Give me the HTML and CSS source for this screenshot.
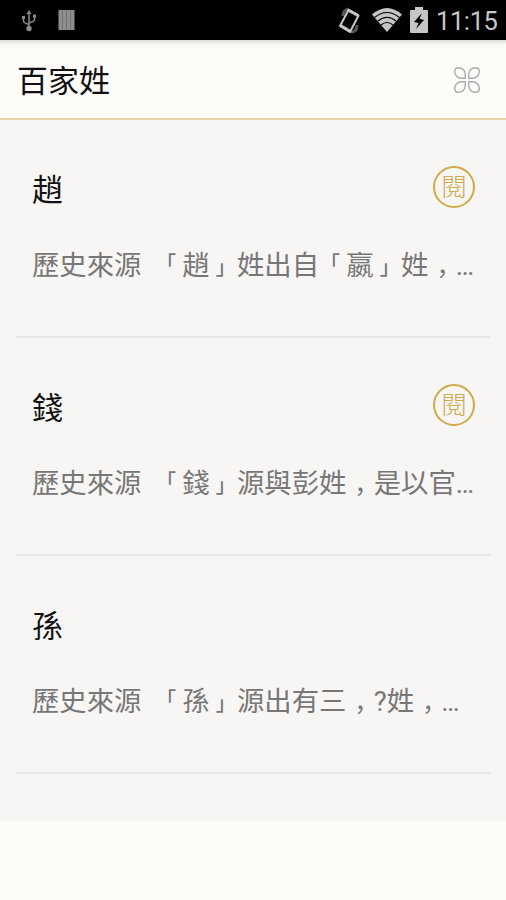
FILE: index.html
```html
<!DOCTYPE html>
<html lang="zh-Hant">
<head>
    <meta charset="UTF-8">
    <meta name="viewport" content="width=device-width, initial-scale=1.0">
    <title>百家姓</title>
    <link rel="stylesheet" href="styles.css">
</head>
<body>
    <!-- Status bar -->
    <div class="status-bar">
        <div class="status-left">
            <svg class="icon-usb" width="16" height="22" viewBox="0 0 16 22" fill="none" stroke="#8c8c8c" stroke-width="1.5">
                <path d="M8 3v15M2.500 7.500v3.500q0 2 5.500 3.500M13.500 6.500v3q0 2-5.500 3.500"/>
                <path d="M8 0l2.500 4h-5zM1 6h3v3H1zM12 4.500h3v3h-3z" fill="#8c8c8c" stroke="none"/>
                <circle cx="8" cy="18.500" r="2.700" fill="#8c8c8c" stroke="none"/>
            </svg>
            <svg class="icon-bars" width="17" height="20" viewBox="0 0 17 20">
                <path d="M.500 0h16v20H.500z" fill="#8e8e8e"/>
                <path d="M4.500 0v20M8.500 0v20M12.500 0v20" stroke="#717171"/>
            </svg>
        </div>
        <div class="status-right">
            <svg class="icon-rotate" width="24" height="28" viewBox="0 0 24 28">
                <path d="M5 9q0-6 6-7M19 18q0 7-6 7" fill="none" stroke="#555" stroke-width="3"/>
                <path d="M10.500 3L20.500 8.500 12 25 2 19z" fill="#000" stroke="#c6c6c6" stroke-width="2" stroke-linejoin="round"/>
                <path d="M10 3l10 5.500M2.500 18.500l10 6" stroke="#c6c6c6" stroke-width="3"/>
            </svg>
            <svg class="icon-wifi" width="30" height="24" viewBox="0 0 30 24">
                <path d="M0 6.500Q15-6.500 30 6.500L15 24z" fill="#c6c6c6"/>
                <path d="M2.500 9.500q12.500-10 25 0M6 13q9-7.500 18 0M9 17q6-5 12 0" fill="none" stroke="#000" stroke-width="1.200"/>
            </svg>
            <svg class="icon-battery" width="18" height="26" viewBox="0 0 18 26">
                <path d="M5 0h8v3h4q1 0 1 1v21q0 1-1 1H1q-1 0-1-1V4q0-1 1-1h4z" fill="#c6c6c6"/>
                <path d="M12 6L4 15l4.500 1L6 22l8-9-4.500-1.200z" fill="#000"/>
            </svg>
            <span class="clock">11:15</span>
        </div>
    </div>

    <!-- Title bar -->
    <header class="header">
        <h1 class="header-title">百家姓</h1>
        <svg class="icon-menu" width="28" height="28" viewBox="0 0 28 28" fill="none" stroke="#aaa" stroke-width="1.400">
            <path id="petal" d="M12.300 12.300H8.500C4.500 12.300 1.700 9.300 1.700 5.500Q1.700 1.700 5.500 1.700C9.300 1.700 12.300 4.500 12.300 8.500z"/>
            <use href="#petal" transform="matrix(-1 0 0 1 28 0)"/>
            <use href="#petal" transform="matrix(1 0 0 -1 0 28)"/>
            <use href="#petal" transform="rotate(180 14 14)"/>
        </svg>
    </header>

    <!-- Surname list -->
    <main class="list">
        <article class="item">
            <div class="item-top">
                <h2 class="surname">趙</h2>
                <span class="badge">閱</span>
            </div>
            <p class="summary">歷史來源&nbsp;&nbsp;<span class="open">「</span>趙<span class="close">」</span>姓出自<span class="open">「</span>嬴<span class="close">」</span>姓<span class="comma">，</span>…</p>
        </article>
        <article class="item">
            <div class="item-top">
                <h2 class="surname">錢</h2>
                <span class="badge">閱</span>
            </div>
            <p class="summary">歷史來源&nbsp;&nbsp;<span class="open">「</span>錢<span class="close">」</span>源與彭姓<span class="comma">，</span>是以官…</p>
        </article>
        <article class="item">
            <div class="item-top">
                <h2 class="surname">孫</h2>
            </div>
            <p class="summary">歷史來源&nbsp;&nbsp;<span class="open">「</span>孫<span class="close">」</span>源出有三<span class="comma">，</span>?姓<span class="comma">，</span>…</p>
        </article>
    </main>
</body>
</html>
```

FILE: styles.css
```css
* {
    box-sizing: border-box;
}
body {
    margin: 0;
    min-height: 900px;
    background: #fdfcf7;
    color: #111;
    font-family: Roboto, "Noto Sans CJK TC", sans-serif;
}
h1, h2, p {
    margin: 0;
    font-weight: 400;
}
svg {
    display: block;
    flex: none;
}
.status-bar {
    display: flex;
    justify-content: space-between;
    height: 40px;
    padding: 0 8px 0 21px;
    background: #000;
}
.status-left {
    display: flex;
    gap: 21px;
    padding-top: 10px;
}
.status-right {
    display: flex;
    align-items: flex-start;
    padding-top: 7px;
}
.icon-wifi {
    margin: 1px 0 0 10px;
}
.icon-battery {
    margin-left: 8px;
}
.clock {
    width: 62px;
    margin-left: 8px;
    color: #c6c6c6;
    font-size: 25.500px;
    letter-spacing: -0.4px;
    line-height: 29px;
    white-space: nowrap;
}
.header {
    display: flex;
    align-items: center;
    justify-content: space-between;
    height: 80px;
    padding: 1px 25px 0 17px;
    border-bottom: 2px solid #e8d5ae;
    background: linear-gradient(#dcdcda, #fbfaf7 5px, #fdfcf8 10px);
}
.header-title {
    padding-top: 5px;
    font-size: 31px;
    line-height: 40px;
}
.list {
    height: 701px;
    padding: 0 15px 0 16px;
    background: #f7f6f4;
}
.item {
    height: 218px;
    padding: 46px 0 0 16px;
    border-bottom: 2px solid #e8e7e5;
}
.item-top {
    display: flex;
    justify-content: space-between;
    height: 42px;
    padding-right: 16px;
}
.surname {
    font-size: 31px;
    line-height: 49px;
}
.badge {
    width: 42px;
    height: 42px;
    border: 2px solid #cfaa45;
    border-radius: 50%;
    color: #cfaa4f;
    font-size: 25px;
    font-weight: 300;
    line-height: 39px;
    text-align: center;
}
.summary {
    margin-top: 38px;
    color: #777;
    font-size: 27.350px;
    line-height: 40px;
    white-space: nowrap;
}
/* punctuation keeps a full cell but is drawn smaller inside it */
.open, .close, .comma {
    display: inline-block;
    width: 27.350px;
    font-size: 20px;
    font-weight: 500;
    line-height: 20px;
}
.open {
    text-indent: 1px;
    vertical-align: 4px;
}
.close {
    text-indent: 6px;
    vertical-align: 0;
}
.comma {
    font-family: "Noto Sans CJK JP", sans-serif;
    font-feature-settings: "halt";
    font-size: 25px;
    font-weight: 400;
    text-indent: 8px;
}
```
